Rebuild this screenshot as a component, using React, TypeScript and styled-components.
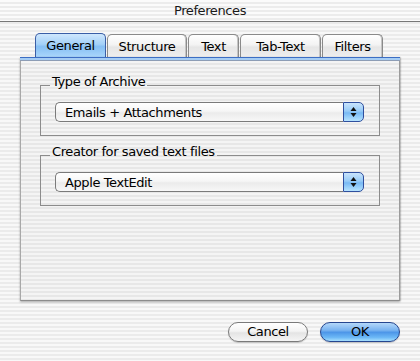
import React from "react";
import styled, { createGlobalStyle, css } from "styled-components";

const GlobalStyle = createGlobalStyle`
  html, body {
    margin: 0;
    padding: 0;
  }
  body {
    font-family: "DejaVu Sans", sans-serif;
  }
`;

const pinstripe = (a: string, b: string) => css`
  background: repeating-linear-gradient(
    to bottom,
    ${a} 0px,
    ${a} 2px,
    ${b} 2px,
    ${b} 4px
  );
`;

const Window = styled.div`
  width: 420px;
  height: 361px;
  display: flex;
  flex-direction: column;
  overflow: hidden;
  ${pinstripe("#f8f8f8", "#ebebeb")}
  font: 13px/16px "DejaVu Sans", "Lucida Grande", sans-serif;
  letter-spacing: -0.4px;
  color: #000;
`;

const TitleBar = styled.div`
  height: 21px;
  border-bottom: 1px solid #787878;
  display: flex;
  align-items: center;
  justify-content: center;
  ${pinstripe("#fbfbfb", "#ececec")}
  color: #1a1a1a;
`;

const Body = styled.div`
  flex: 1;
  display: flex;
  flex-direction: column;
  padding: 11px 20px 0;
`;

const TabRow = styled.div`
  display: flex;
  align-items: flex-end;
  gap: 1px;
  height: 24px;
  padding-left: 15px;
`;

const Tab = styled.div<{ $w: number; $active?: boolean }>`
  width: ${(p) => p.$w}px;
  height: ${(p) => (p.$active ? 24 : 23)}px;
  box-sizing: border-box;
  padding-top: 1px;
  display: flex;
  align-items: center;
  justify-content: center;
  border: 1px solid ${(p) => (p.$active ? "#3a5ea6" : "#8a8a8a")};
  border-bottom: none;
  border-radius: 5px 5px 0 0;
  background: ${(p) =>
    p.$active
      ? "linear-gradient(#cfe7fd 0%, #a3d0f8 45%, #86bff4 55%, #a9d6fb 100%)"
      : "linear-gradient(#ffffff 0%, #f3f3f3 45%, #e6e6e6 55%, #eeeeee 100%)"};
  box-shadow: ${(p) =>
    p.$active ? "none" : "inset -1px 0 0 #c4c4c4"};
`;

const Panel = styled.div`
  height: 244px;
  box-sizing: border-box;
  display: flex;
  flex-direction: column;
  border-left: 1px solid #a8a8a8;
  border-right: 1px solid #9c9c9c;
  border-bottom: 1px solid #8c8c8c;
  box-shadow: 0 1px 2px rgba(0, 0, 0, 0.3), 1px 0 1px rgba(0, 0, 0, 0.12);
  ${pinstripe("#f4f4f4", "#e7e7e7")}
`;

const TabStrip = styled.div`
  height: 4px;
  box-sizing: border-box;
  margin: 0 -1px;
  border-top: 1px solid #3c6ec4;
  border-bottom: 1px solid #8d9db5;
  background: #a6cdf4;
`;

const PanelContent = styled.div`
  display: flex;
  flex-direction: column;
  gap: 8px;
  padding: 13px 19px 0;
`;

const Group = styled.fieldset`
  margin: 0;
  min-width: 0;
  padding: 6px 15px 13px 14px;
  border: 1px solid #8c8c8c;
`;

const GroupLabel = styled.legend`
  margin-left: -5px;
  padding: 0 2px 6px;
  line-height: 16px;
`;

const Popup = styled.div`
  display: flex;
  height: 20px;
`;

const PopupValue = styled.div`
  flex: 1;
  box-sizing: border-box;
  display: flex;
  align-items: center;
  padding: 1px 0 0 9px;
  border: 1px solid #7a7a7a;
  border-right: none;
  border-radius: 5px 0 0 5px;
  background: linear-gradient(#ffffff 0%, #f6f6f6 45%, #ebebeb 55%, #f7f7f7 100%);
`;

const PopupArrows = styled.div`
  width: 21px;
  box-sizing: border-box;
  display: flex;
  align-items: center;
  justify-content: center;
  border: 1px solid #2f4f9e;
  border-radius: 0 5px 5px 0;
  background: linear-gradient(#c9e4fc 0%, #97cbf7 45%, #78b9f4 55%, #b6e3fe 100%);
`;

const ButtonRow = styled.div`
  display: flex;
  justify-content: flex-end;
  gap: 12px;
  margin-top: 21px;
`;

const Button = styled.button<{ $default?: boolean }>`
  width: 80px;
  height: 20px;
  padding: 0;
  font: inherit;
  letter-spacing: inherit;
  color: #000;
  border-radius: 10px;
  border: 1px solid ${(p) => (p.$default ? "#26468f" : "#7a7a7a")};
  background: ${(p) =>
    p.$default
      ? "linear-gradient(#b4d8fa 0%, #79b3f0 40%, #4d96e8 52%, #6cb8f6 80%, #a8dffd 100%)"
      : "linear-gradient(#ffffff 0%, #f4f4f4 45%, #e4e4e4 55%, #f5f5f5 100%)"};
  box-shadow: 0 1px 1px rgba(0, 0, 0, 0.18);
`;

const Arrows = () => (
  <svg width="7" height="12" viewBox="0 0 7 12">
    <polygon points="3.5,1 6.5,5 0.5,5" fill="#111" />
    <polygon points="0.5,7 6.5,7 3.5,11" fill="#111" />
  </svg>
);

const tabs = [
  { label: "General", w: 71, active: true },
  { label: "Structure", w: 80 },
  { label: "Text", w: 51 },
  { label: "Tab-Text", w: 81 },
  { label: "Filters", w: 61 },
];

const groups = [
  { label: "Type of Archive", value: "Emails + Attachments" },
  { label: "Creator for saved text files", value: "Apple TextEdit" },
];

const App = () => {
  return (
    <>
      <GlobalStyle />
      <Window>
        <TitleBar>Preferences</TitleBar>
        <Body>
          <TabRow>
            {tabs.map((t) => (
              <Tab key={t.label} $w={t.w} $active={t.active}>
                {t.label}
              </Tab>
            ))}
          </TabRow>
          <Panel>
            <TabStrip />
            <PanelContent>
              {groups.map((g) => (
                <Group key={g.label}>
                  <GroupLabel>{g.label}</GroupLabel>
                  <Popup>
                    <PopupValue>{g.value}</PopupValue>
                    <PopupArrows>
                      <Arrows />
                    </PopupArrows>
                  </Popup>
                </Group>
              ))}
            </PanelContent>
          </Panel>
          <ButtonRow>
            <Button>Cancel</Button>
            <Button $default>OK</Button>
          </ButtonRow>
        </Body>
      </Window>
    </>
  );
};

export default App;
